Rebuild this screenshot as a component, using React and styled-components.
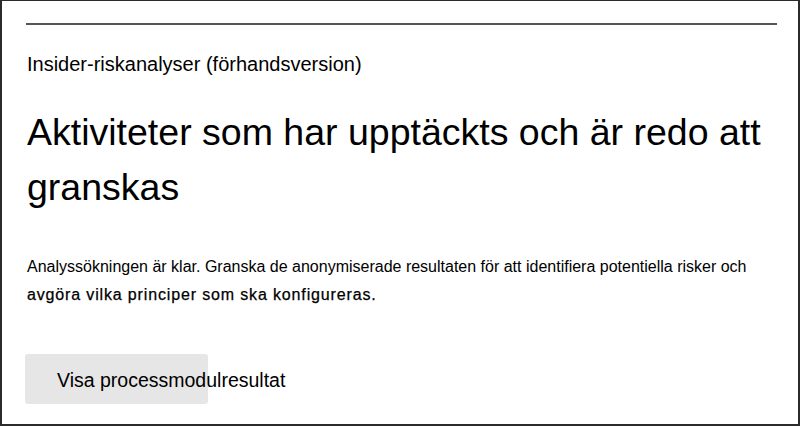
import React from "react";
import styled, { createGlobalStyle } from "styled-components";

const Global = createGlobalStyle`
  html, body { margin: 0; padding: 0; background: #fff; }
  * { box-sizing: border-box; }
`;

const Frame = styled.div`
  width: 800px;
  height: 426px;
  border: 2px solid #2b2b2b;
  border-top-width: 1px;
  padding: 22px 21px 0 25px;
  font-family: "Liberation Sans", Arial, sans-serif;
  color: #000;
  overflow: hidden;
`;

const Rule = styled.div`
  height: 2px;
  background: #555;
  margin-left: -1px;
`;

const Eyebrow = styled.div`
  margin-top: 27px;
  font-size: 20px;
  line-height: 24px;
`;

const Heading = styled.h1`
  margin: 28.5px 0 0;
  font-weight: 400;
  font-size: 37.5px;
  line-height: 55px;
`;

const Body = styled.p`
  margin: 38px 0 0;
  font-size: 16px;
  line-height: 28px;
`;

const Emph = styled.span`
  letter-spacing: 0.85px;
  -webkit-text-stroke: 0.25px #000;
`;

const Button = styled.button`
  display: block;
  margin-top: 45px;
  width: 183px;
  height: 50px;
  margin-left: -2px;
  padding: 4px 0 0 32px;
  border: none;
  border-radius: 3px;
  background: #e6e6e6;
  font-family: inherit;
  font-size: 19.5px;
  color: #000;
  text-align: left;
  white-space: nowrap;
  overflow: visible;
`;

export default function App() {
  return (
    <>
      <Global />
      <Frame>
        <Rule />
        <Eyebrow>Insider-riskanalyser (förhandsversion)</Eyebrow>
        <Heading>Aktiviteter som har upptäckts och är redo att granskas</Heading>
        <Body>
          Analyssökningen är klar. Granska de anonymiserade resultaten för att identifiera potentiella risker och{" "}
          <Emph>avgöra vilka principer som ska konfigureras.</Emph>
        </Body>
        <Button>Visa processmodulresultat</Button>
      </Frame>
    </>
  );
}
